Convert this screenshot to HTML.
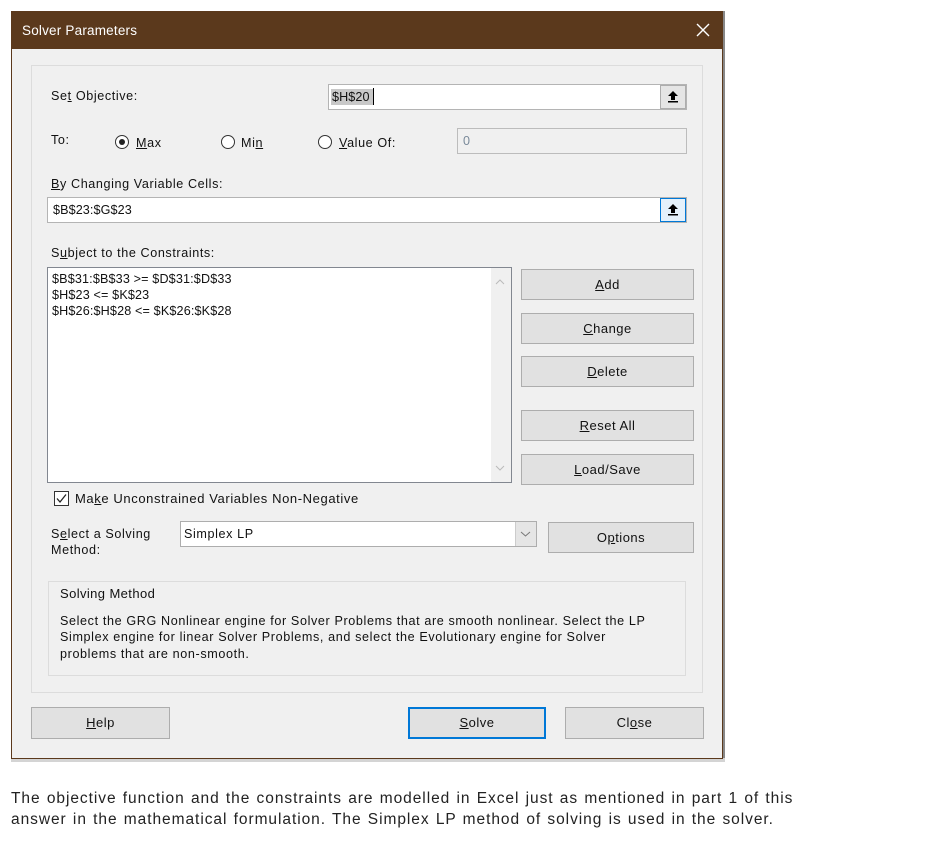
<!DOCTYPE html>
<html><head><meta charset="utf-8"><style>
*{box-sizing:border-box;margin:0;padding:0}
body{width:931px;height:841px;background:#fff;position:relative;overflow:hidden;font-family:"Liberation Sans",sans-serif;font-size:12px;color:#000}
.a{position:absolute}
.t{position:absolute;white-space:nowrap;font-size:12.6px;letter-spacing:0.6px;line-height:14px;color:#111}
.inp{position:absolute;background:#fff;border:1px solid #b4b4b4}
.btn{position:absolute;background:#e1e1e1;border:1px solid #adadad;text-align:center;font-size:13px;letter-spacing:0.5px;color:#111}
.rad{position:absolute;width:14px;height:14px;border:1px solid #333;border-radius:50%;background:#fff}
u{text-decoration:underline}
</style></head><body>
<div class="a" style="left:723px;top:11px;width:2px;height:750px;background:#888"></div>
<div class="a" style="left:11px;top:758px;width:714px;height:4px;background:#d4d4d4"></div>
<div class="a" style="left:11px;top:11px;width:712px;height:748px;background:#f0f0f0;border:1px solid #5b391c;border-top:none"></div>
<div class="a" style="left:11px;top:11px;width:712px;height:38px;background:#5b391c"></div>
<div class="t" style="left:22px;top:23px;color:#fff;font-size:13.5px;line-height:16px;letter-spacing:0.2px">Solver Parameters</div>
<svg class="a" style="left:696px;top:23px" width="14" height="14"><path d="M1 1L13 13M13 1L1 13" stroke="#fff" stroke-width="1.4"/></svg>
<div class="a" style="left:31px;top:65px;width:672px;height:628px;border:1px solid #dcdcdc"></div>

<div class="t" style="left:51px;top:89px">Se<u>t</u> Objective:</div>
<div class="inp" style="left:328px;top:84px;width:359px;height:26px"></div>
<div class="a" style="left:331px;top:89px;width:42px;height:16px;background:#c8c8c8"></div>
<div class="t" style="left:332px;top:90px;letter-spacing:0.1px">$H$20</div>
<div class="a" style="left:373px;top:88px;width:1px;height:17px;background:#000"></div>
<div class="btn" style="left:660px;top:85px;width:26px;height:24px;background:#e5e5e5"></div>
<svg class="a" style="left:667px;top:90px" width="12" height="14"><path d="M6 1L1 6H4V10H8V6H11Z" fill="#000"/><rect x="1" y="11" width="10" height="1.5" fill="#000"/></svg>

<div class="t" style="left:51px;top:133px">To:</div>
<div class="rad" style="left:115px;top:135px"></div><div class="a" style="left:119px;top:139px;width:6px;height:6px;border-radius:50%;background:#222"></div>
<div class="t" style="left:136px;top:136px"><u>M</u>ax</div>
<div class="rad" style="left:221px;top:135px"></div>
<div class="t" style="left:241px;top:136px">Mi<u>n</u></div>
<div class="rad" style="left:318px;top:135px"></div>
<div class="t" style="left:339px;top:136px"><u>V</u>alue Of:</div>
<div class="inp" style="left:457px;top:128px;width:230px;height:26px;background:#f0f0f0;border-color:#bcbcbc"></div>
<div class="t" style="left:463px;top:134px;color:#7a8a9a">0</div>

<div class="t" style="left:51px;top:177px"><u>B</u>y Changing Variable Cells:</div>
<div class="inp" style="left:47px;top:197px;width:640px;height:26px"></div>
<div class="t" style="left:53px;top:203px;letter-spacing:0.1px">$B$23:$G$23</div>
<div class="a" style="left:660px;top:198px;width:26px;height:24px;border:1px solid #0078d7;background:#e5f1fb"></div>
<svg class="a" style="left:667px;top:203px" width="12" height="14"><path d="M6 1L1 6H4V10H8V6H11Z" fill="#000"/><rect x="1" y="11" width="10" height="1.5" fill="#000"/></svg>

<div class="t" style="left:51px;top:246px">S<u>u</u>bject to the Constraints:</div>
<div class="inp" style="left:47px;top:267px;width:465px;height:216px;border-color:#828790"></div>
<div class="t" style="left:52px;top:271px;line-height:16px;letter-spacing:0.15px">$B$31:$B$33 &gt;= $D$31:$D$33<br>$H$23 &lt;= $K$23<br>$H$26:$H$28 &lt;= $K$26:$K$28</div>
<div class="a" style="left:491px;top:268px;width:20px;height:214px;background:#f0f0f0"></div>
<svg class="a" style="left:495px;top:278px" width="10" height="8"><path d="M1 6L5 2L9 6" stroke="#bbb" fill="none"/></svg>
<svg class="a" style="left:495px;top:464px" width="10" height="8"><path d="M1 2L5 6L9 2" stroke="#bbb" fill="none"/></svg>

<div class="btn" style="left:521px;top:269px;width:173px;height:31px;line-height:29px"><u>A</u>dd</div>
<div class="btn" style="left:521px;top:313px;width:173px;height:31px;line-height:29px"><u>C</u>hange</div>
<div class="btn" style="left:521px;top:356px;width:173px;height:31px;line-height:29px"><u>D</u>elete</div>
<div class="btn" style="left:521px;top:410px;width:173px;height:31px;line-height:29px"><u>R</u>eset All</div>
<div class="btn" style="left:521px;top:454px;width:173px;height:31px;line-height:29px"><u>L</u>oad/Save</div>

<div class="a" style="left:54px;top:491px;width:15px;height:15px;border:1px solid #333;background:#fff"></div>
<svg class="a" style="left:55px;top:492px" width="13" height="13"><path d="M2 6.5L5 10L11 2.5" stroke="#222" stroke-width="1.3" fill="none"/></svg>
<div class="t" style="left:75px;top:492px;font-size:13px">Ma<u>k</u>e Unconstrained Variables Non-Negative</div>

<div class="t" style="left:51px;top:526px;line-height:16px">S<u>e</u>lect a Solving<br>Method:</div>
<div class="inp" style="left:180px;top:521px;width:357px;height:26px;border-color:#adadad"></div>
<div class="t" style="left:184px;top:527px">Simplex LP</div>
<div class="a" style="left:515px;top:522px;width:21px;height:24px;background:#e5e5e5;border-left:1px solid #ccc"></div>
<svg class="a" style="left:520px;top:530px" width="11" height="8"><path d="M1 2L5.5 6L10 2" stroke="#777" fill="none"/></svg>
<div class="btn" style="left:548px;top:522px;width:146px;height:31px;line-height:29px">O<u>p</u>tions</div>

<div class="a" style="left:48px;top:581px;width:638px;height:95px;border:1px solid #dcdcdc"></div>
<div class="t" style="left:60px;top:587px;font-size:13px;letter-spacing:0.4px">Solving Method</div>
<div class="t" style="left:60px;top:613px;line-height:16.3px;letter-spacing:0.62px">Select the GRG Nonlinear engine for Solver Problems that are smooth nonlinear. Select the LP<br>Simplex engine for linear Solver Problems, and select the Evolutionary engine for Solver<br>problems that are non-smooth.</div>

<div class="btn" style="left:31px;top:707px;width:139px;height:32px;line-height:30px"><u>H</u>elp</div>
<div class="btn" style="left:408px;top:707px;width:138px;height:32px;line-height:28px;border:2px solid #0078d7"><u>S</u>olve</div>
<div class="btn" style="left:565px;top:707px;width:139px;height:32px;line-height:30px">Cl<u>o</u>se</div>

<div class="t" style="left:11px;top:788px;font-size:15.5px;line-height:21px;color:#222;letter-spacing:0.95px;word-spacing:1px">The objective function and the constraints are modelled in Excel just as mentioned in part 1 of this<br>answer in the mathematical formulation. The Simplex LP method of solving is used in the solver.</div>
</body></html>
